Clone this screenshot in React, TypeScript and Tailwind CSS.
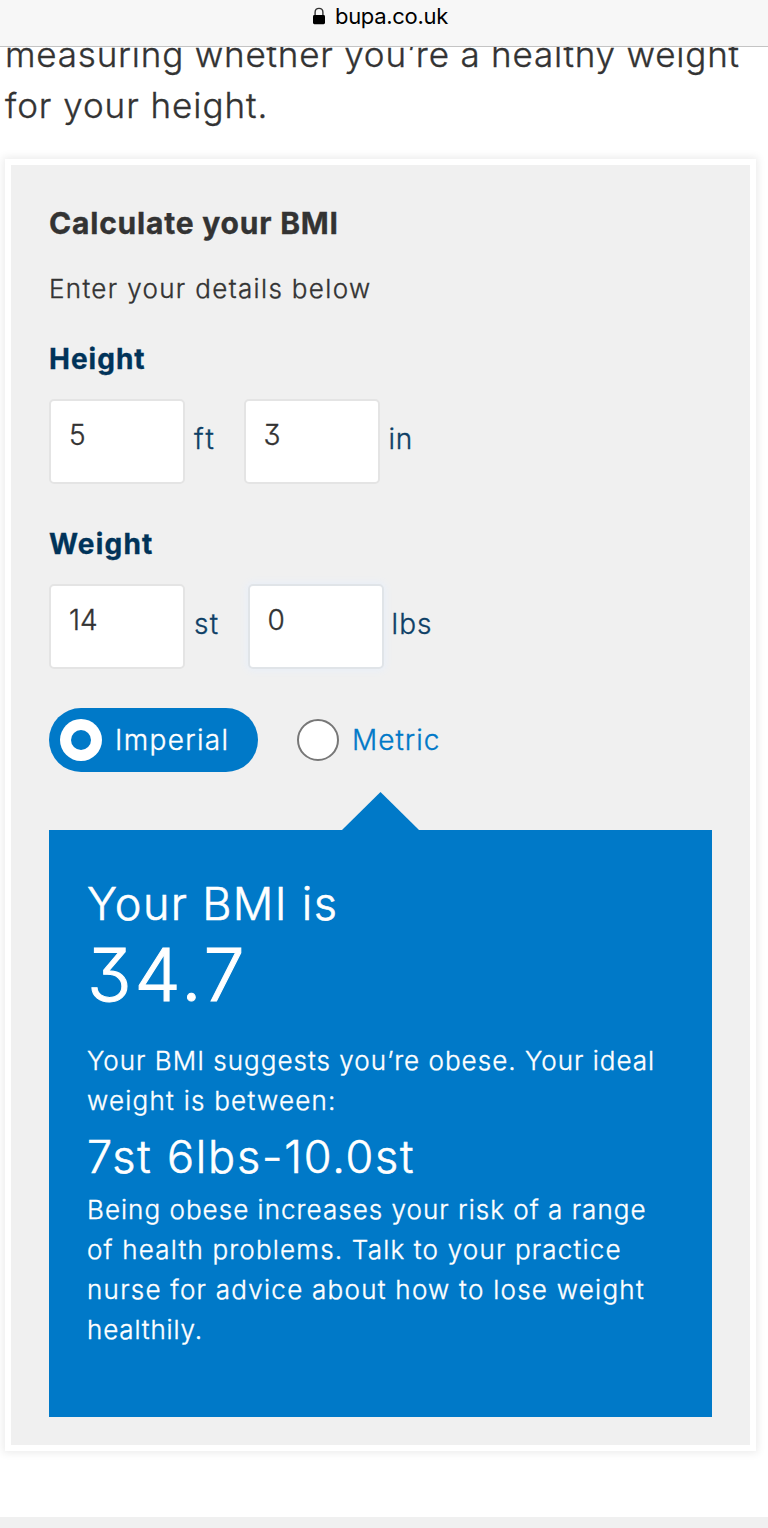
import type { ReactNode } from "react";

function Field({ value, focused = false }: { value: string; focused?: boolean }) {
  return (
    <div
      className={`h-[85px] w-[136px] rounded-[5px] border-2 bg-white pl-[18px] pt-[14px] text-[28px] leading-[40px] text-[#333] ${
        focused ? "border-[#e0e4e8] shadow-[0_0_7px_2px_#e9eff8]" : "border-[#e4e4e4]"
      }`}
    >
      {value}
    </div>
  );
}

function Unit({ children }: { children: ReactNode }) {
  return <span className="mt-[20px] text-[28px] leading-[40px] text-[#0d3f66]">{children}</span>;
}

function Header() {
  return (
    <header className="relative z-10 flex h-[47px] justify-center border-b border-[#c4c4c4] bg-[#f7f7f7] pr-[8px] text-black">
      <svg className="mt-[7px] h-[18px] w-[14px]" viewBox="0 0 14 18" aria-hidden="true">
        <path d="M3.1 9V5.2C3.1 2.6 4.7 1.4 7 1.4s3.9 1.2 3.9 3.8V9" fill="none" stroke="#333" strokeWidth="1.4" />
        <rect x="1" y="8" width="12" height="9.2" rx="1.4" fill="#000" />
      </svg>
      <span className="ml-[9px] h-[32px] text-[22px] font-normal leading-[32px] tracking-[-0.3px] [-webkit-text-stroke:0px]">bupa.co.uk</span>
    </header>
  );
}

export default function App() {
  return (
    <div className="flex h-[1528px] w-[768px] flex-col overflow-hidden whitespace-nowrap bg-white font-['Inter',sans-serif] font-light text-[#333] [-webkit-text-stroke:0.35px] [font-feature-settings:'cv09']">
      <Header />
      <p className="-mt-[18px] pl-[5px] text-[35px] leading-[51px]">
        <span className="block tracking-[0.8px]">measuring whether you’re a healthy weight</span>
        <span className="block tracking-[0.95px]">for your height.</span>
      </p>

      <section className="ml-[5px] mt-[28px] h-[1292px] w-[751px] shrink-0 border-6 border-white bg-[#f0f0f0] px-[38px] pt-[38px] shadow-[0_0_8px_2px_rgba(0,0,0,0.08)]">
        <h2 className="text-[30px] font-bold leading-[40px] tracking-[0.8px]">Calculate your BMI</h2>
        <p className="mt-[26px] text-[26px] leading-[40px] tracking-[1.35px]">Enter your details below</p>

        <h3 className="mt-[30px] text-[28px] font-bold leading-[40px] tracking-[1px] text-[#003359]">Height</h3>
        <div className="mt-[20px] flex">
          <Field value="5" />
          <div className="flex w-[58.5px] pl-[9px]"><Unit><span className="tracking-[2.4px]">ft</span></Unit></div>
          <Field value="3" />
          <div className="flex pl-[9px]"><Unit><span className="tracking-[0.8px]">in</span></Unit></div>
        </div>

        <h3 className="mt-[40px] text-[28px] font-bold leading-[40px] tracking-[1.2px] text-[#003359]">Weight</h3>
        <div className="mt-[20px] flex">
          <Field value="14" />
          <div className="flex w-[62.5px] pl-[9px]"><Unit><span className="tracking-[1.2px]">st</span></Unit></div>
          <Field value="0" focused />
          <div className="flex pl-[8px]"><Unit><span className="tracking-[1.1px]">lbs</span></Unit></div>
        </div>

        <div className="mt-[39px] flex h-[64px] items-center text-[28px] leading-[40px]">
          <div className="flex h-[64px] w-[209px] items-center rounded-full bg-[#0079c8] pl-[11px] text-white">
            <span className="flex size-[42px] items-center justify-center rounded-full bg-white">
              <span className="size-[20px] rounded-full bg-[#0079c8]" />
            </span>
            <span className="ml-[13px] tracking-[1.35px]">Imperial</span>
          </div>
          <span className="ml-[39px] size-[42px] rounded-full border-2 border-[#777] bg-white" />
          <span className="ml-[13px] tracking-[1px] text-[#0079c8]">Metric</span>
        </div>

        <svg className="ml-[293px] mt-[20px] block" width="77" height="38" viewBox="0 0 77 38" aria-hidden="true">
          <path d="M0 38 38.5 0 77 38Z" fill="#0079c8" />
        </svg>
        <div className="h-[587px] w-[663px] bg-[#0079c8] pl-[38px] pt-[44px] text-[26px] leading-[40px] text-white">
          <p className="text-[45px] leading-[60px] tracking-[1.35px] [-webkit-text-stroke:0.6px]">Your BMI is</p>
          <p className="mt-px text-[73.5px] leading-[80px] tracking-[2.8px] [-webkit-text-stroke:1px]">34.7</p>
          <p className="mt-[26px]">
            <span className="block tracking-[1.02px]">Your BMI suggests you’re obese. Your ideal</span>
            <span className="block tracking-[1.25px]">weight is between:</span>
          </p>
          <p className="mt-[6px] text-[45px] leading-[60px] tracking-[1.8px] [-webkit-text-stroke:0.6px]">7st 6lbs-10.0st</p>
          <p className="mt-[3px]">
            <span className="block tracking-[1.03px]">Being obese increases your risk of a range</span>
            <span className="block tracking-[1.19px]">of health problems. Talk to your practice</span>
            <span className="block tracking-[1.26px]">nurse for advice about how to lose weight</span>
            <span className="block tracking-[0.85px]">healthily.</span>
          </p>
        </div>
      </section>
      <div className="mt-[66px] h-[11px] shrink-0 bg-[#f0f0f0]" />
    </div>
  );
}
